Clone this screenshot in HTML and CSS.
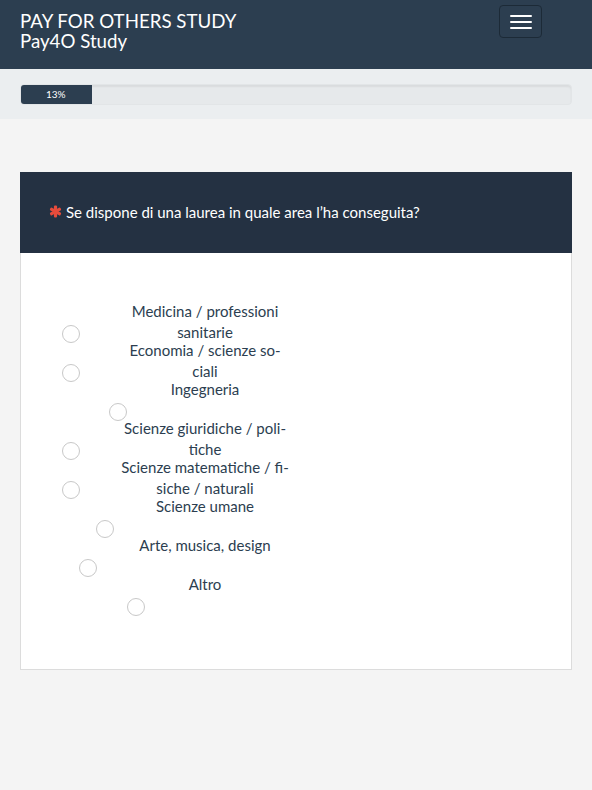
FILE: index.html
```
<!DOCTYPE html>
<html lang="it">
<head>
<meta charset="utf-8">
<title>Pay4O Study</title>
<link rel="stylesheet" href="styles.css">
</head>
<body>
<header class="topbar">
  <div class="brand">
    <div class="brand-line">PAY FOR OTHERS STUDY</div>
    <div class="brand-line">Pay4O Study</div>
  </div>
  <button class="menu-btn" type="button" aria-label="Menu">
    <span class="bar"></span><span class="bar"></span><span class="bar"></span>
  </button>
</header>
<section class="progress-band">
  <div class="progress">
    <div class="progress-fill" style="width:13%">13%</div>
  </div>
</section>
<main class="content">
  <div class="card">
    <div class="card-head">
      <svg class="req" viewBox="0 0 14 14" aria-hidden="true">
        <g fill="#e74c3c">
          <rect x="5.3" y="0.5" width="3.4" height="13" rx="1.2"/>
          <rect x="5.3" y="0.5" width="3.4" height="13" rx="1.2" transform="rotate(60 7 7)"/>
          <rect x="5.3" y="0.5" width="3.4" height="13" rx="1.2" transform="rotate(-60 7 7)"/>
        </g>
      </svg>
      <span class="question">Se dispone di una laurea in quale area l’ha conseguita?</span>
    </div>
    <div class="card-body">
      <div class="options">
        <label class="opt"><span class="txt">Medicina / professioni sanitarie</span><span class="radio"></span></label>
        <label class="opt"><span class="txt">Economia / scienze so&shy;ciali</span><span class="radio"></span></label>
        <label class="opt"><span class="txt">Ingegneria</span><span class="radio r-ing"></span></label>
        <label class="opt"><span class="txt">Scienze giuridiche / poli&shy;tiche</span><span class="radio"></span></label>
        <label class="opt"><span class="txt">Scienze matematiche / fi&shy;siche / naturali</span><span class="radio"></span></label>
        <label class="opt"><span class="txt">Scienze umane</span><span class="radio r-uma"></span></label>
        <label class="opt"><span class="txt">Arte, musica, design</span><span class="radio r-arte"></span></label>
        <label class="opt"><span class="txt">Altro</span><span class="radio r-altro"></span></label>
      </div>
    </div>
  </div>
</main>
</body>
</html>
```
FILE: styles.css
```
* { box-sizing: border-box; }
html, body { margin: 0; padding: 0; }
body {
  background: #f4f4f4;
  font-family: Lato, "Noto Sans", "Liberation Sans", sans-serif;
  color: #2c3e50;
  min-height: 790px;
}
.topbar {
  background: #2c3e50;
  height: 69px;
  display: flex;
  justify-content: space-between;
  align-items: flex-start;
  padding: 0 50px 0 20px;
}
.brand {
  padding-top: 11px;
  color: #fff;
  font-size: 18.7px;
  line-height: 20px;
}
.menu-btn {
  margin-top: 5px;
  width: 43px;
  height: 33px;
  background: transparent;
  border: 1px solid #1c2a37;
  border-radius: 4px;
  display: flex;
  flex-direction: column;
  align-items: center;
  justify-content: center;
  gap: 4px;
  padding: 0;
}
.bar {
  display: block;
  width: 22px;
  height: 2px;
  background: #fff;
  border-radius: 1px;
}
.progress-band {
  background: #ebeef0;
  padding: 15px 20px 14px;
}
.progress {
  height: 21px;
  background: #e6e9eb;
  border-radius: 4px;
  box-shadow: inset 0 2px 2px rgba(0,0,0,0.06);
  border: 1px solid #e2e5e7;
  overflow: hidden;
  display: flex;
}
.progress-fill {
  background: #2c3e50;
  color: #fff;
  font-size: 10px;
  line-height: 21px;
  text-align: center;
  margin: -1px 0 -1px -1px;
}
.content {
  padding: 53px 20px 20px;
}
.card {
  border: 1px solid #dcdcdc;
  background: #fff;
}
.card-head {
  background: #243142;
  height: 81px;
  display: flex;
  align-items: center;
  padding-left: 29px;
  padding-bottom: 2px;
  color: #fff;
  margin: -1px -1px 0;
}
.req {
  width: 13px;
  height: 13px;
  margin-right: 4px;
}
.question {
  font-size: 15px;
}
.card-body {
  padding: 49px 0 55px 41px;
}
.opt {
  display: grid;
  grid-template-columns: 228px;
  grid-template-rows: 23px 16px;
  height: 39px;
  font-size: 15px;
}
.txt {
  grid-row: 1 / 3;
  grid-column: 1;
  margin-left: 58px;
  margin-top: -1px;
  width: 170px;
  text-align: center;
  line-height: 21px;
}
.radio {
  grid-row: 2;
  grid-column: 1;
  align-self: start;
  width: 18px;
  height: 18px;
  border: 1px solid #c8c8c8;
  border-radius: 50%;
  background: #fff;
}
.r-ing { margin-left: 47px; }
.r-uma { margin-left: 34px; }
.r-arte { margin-left: 17px; }
.r-altro { margin-left: 65px; }
```
